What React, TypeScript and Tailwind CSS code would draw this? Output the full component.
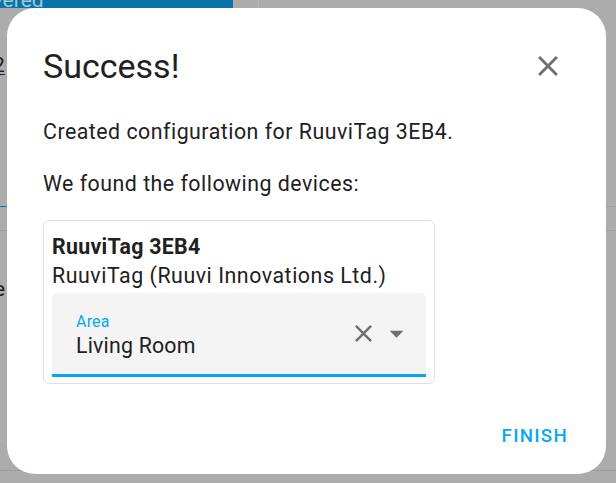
import React from 'react';

const CloseIcon: React.FC<{ className?: string }> = ({ className }) => (
  <svg viewBox="0 0 24 24" className={className} fill="currentColor">
    <path d="M19,6.41L17.59,5L12,10.59L6.41,5L5,6.41L10.59,12L5,17.59L6.41,19L12,13.41L17.59,19L19,17.59L13.41,12L19,6.41Z" />
  </svg>
);

const MenuDown: React.FC<{ className?: string }> = ({ className }) => (
  <svg viewBox="0 0 24 24" className={className} fill="currentColor">
    <path d="M7,10L12,15L17,10H7Z" />
  </svg>
);

const Backdrop: React.FC = () => (
  <div className="flex h-full w-full flex-col">
    {/* top button row */}
    <div className="flex h-[8px] shrink-0">
      <div className="relative w-[233px] overflow-hidden bg-[#0a74a6]">
        <span className="absolute -left-[60px] -top-[10px] whitespace-nowrap text-[21px] leading-[20px] text-[#9fc6da]">Discovered</span>
      </div>
      <div className="ml-[25px] w-px bg-[#b8b8b8]" />
    </div>
    <div className="mt-[45px] h-[24px] text-[21px] leading-[24px] text-[#1f1f1f]">
      <span className="-ml-[7px] underline decoration-1 underline-offset-2">2</span>
    </div>
    <div className="mt-[129px] flex h-px">
      <div className="w-[8px] bg-[#0277bd]" />
      <div className="flex-1 bg-[#a2a2a2]" />
    </div>
    <div className="mt-[23px] h-px bg-[#a0a0a0]" />
    <div className="mt-[46px] h-[24px] text-[21px] leading-[24px] text-[#1f1f1f]">
      <span className="-ml-[6px]">e</span>
    </div>
    <div className="mt-[169px] h-px bg-[#9c9c9c]" />
  </div>
);

export default function App() {
  return (
    <div className="relative h-[483px] w-[616px] overflow-hidden bg-[#acacac] font-['Roboto',sans-serif]">
      <Backdrop />

      <div className="absolute left-[7px] top-[8px] flex h-[466px] w-[599px] flex-col rounded-[28px] bg-white pl-[36px] pr-[32px]">
        <div className="flex items-start justify-between pt-[38px]">
          <h2 className="text-[34px] leading-[40px] font-normal text-[#212121]">Success!</h2>
          <button className="mr-[9px] mt-[3px] text-[#6f6f6f]">
            <CloseIcon className="h-[34px] w-[34px]" />
          </button>
        </div>

        <div className="mt-[30px] text-[21.33px] leading-[32px] tracking-[0.5px] text-[#212121]">
          <p>Created configuration for RuuviTag 3EB4.</p>
          <p className="mt-[20px]">We found the following devices:</p>
        </div>

        <div className="mt-[20px] w-[392px] rounded-[6px] border border-[#e0e0e0] px-[8px] pt-[12px] pb-[6px]">
          <div className="text-[21.33px] leading-[28px] font-bold tracking-[0.3px] text-[#212121]">RuuviTag 3EB4</div>
          <div className="text-[21.33px] leading-[30px] tracking-[0.55px] text-[#212121]">RuuviTag (Ruuvi Innovations Ltd.)</div>

          <div className="mt-[2px] flex h-[84px] items-center rounded-t-[5px] border-b-[3px] border-[#03a9f4] bg-[#f4f4f4] pl-[24px] pr-[13px]">
            <div className="flex-1 pt-[4px]">
              <div className="text-[16px] leading-[20px] tracking-[0.2px] text-[#03a9f4]">Area</div>
              <div className="text-[21.33px] leading-[28px] tracking-[0.2px] text-[#212121]">Living Room</div>
            </div>
            <CloseIcon className="h-[29px] w-[29px] text-[#6f6f6f]" />
            <MenuDown className="ml-[2px] h-[33px] w-[33px] text-[#6f6f6f]" />
          </div>
        </div>

        <div className="mt-auto mb-[26px] flex justify-end">
          <button className="pr-[6px] text-[18.67px] leading-[24px] font-medium tracking-[1.3px] text-[#03a9f4]">FINISH</button>
        </div>
      </div>
    </div>
  );
}
